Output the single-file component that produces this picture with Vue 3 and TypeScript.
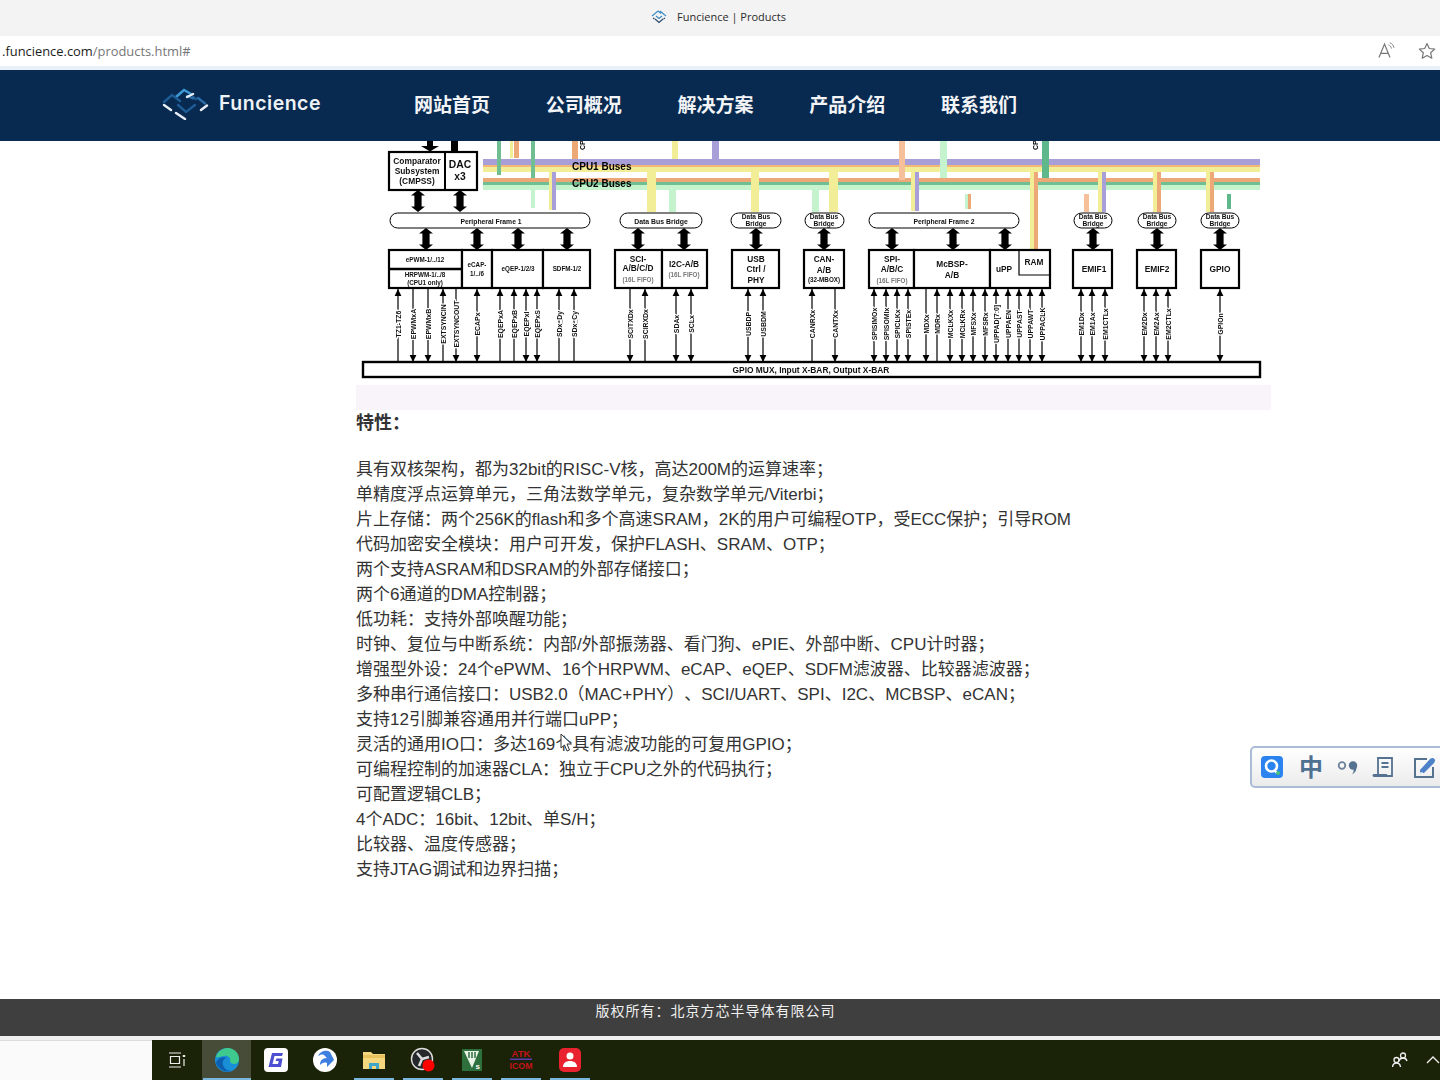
<script setup lang="ts">
const navItems = ['网站首页', '公司概况', '解决方案', '产品介绍', '联系我们']
const features = [
  '具有双核架构，都为32bit的RISC-V核，高达200M的运算速率；',
  '单精度浮点运算单元，三角法数学单元，复杂数学单元/Viterbi；',
  '片上存储：两个256K的flash和多个高速SRAM，2K的用户可编程OTP，受ECC保护；引导ROM',
  '代码加密安全模块：用户可开发，保护FLASH、SRAM、OTP；',
  '两个支持ASRAM和DSRAM的外部存储接口；',
  '两个6通道的DMA控制器；',
  '低功耗：支持外部唤醒功能；',
  '时钟、复位与中断系统：内部/外部振荡器、看门狗、ePIE、外部中断、CPU计时器；',
  '增强型外设：24个ePWM、16个HRPWM、eCAP、eQEP、SDFM滤波器、比较器滤波器；',
  '多种串行通信接口：USB2.0（MAC+PHY）、SCI/UART、SPI、I2C、MCBSP、eCAN；',
  '支持12引脚兼容通用并行端口uPP；',
  '灵活的通用IO口：多达169个具有滤波功能的可复用GPIO；',
  '可编程控制的加速器CLA：独立于CPU之外的代码执行；',
  '可配置逻辑CLB；',
  '4个ADC：16bit、12bit、单S/H；',
  '比较器、温度传感器；',
  '支持JTAG调试和边界扫描；',
]

type Band = { y: number; h: number; c: string }
const bands: Band[] = [
  { y: 159, h: 6, c: '#a99fd8' },
  { y: 165, h: 2, c: '#f1b878' },
  { y: 167, h: 5, c: '#f2ee98' },
  { y: 178, h: 4, c: '#eda878' },
  { y: 182, h: 3, c: '#6fbf92' },
  { y: 185, h: 5, c: '#c4f3cd' },
]
type Bar = { x: number; w: number; y1: number; y2: number; c: string }
const bars: Bar[] = [
  { x: 497, w: 4, y1: 141, y2: 175, c: '#6fbf92' },
  { x: 510, w: 3, y1: 141, y2: 158, c: '#f2ee98' },
  { x: 514, w: 5, y1: 141, y2: 158, c: '#eda878' },
  { x: 531, w: 4, y1: 141, y2: 178, c: '#6fbf92' },
  { x: 531, w: 4, y1: 190, y2: 208, c: '#c4f3cd' },
  { x: 549, w: 3, y1: 172, y2: 210, c: '#f2ee98' },
  { x: 552, w: 4, y1: 172, y2: 210, c: '#a99fd8' },
  { x: 572, w: 6, y1: 141, y2: 159, c: '#eda878' },
  { x: 672, w: 6, y1: 141, y2: 159, c: '#f2ee98' },
  { x: 712, w: 7, y1: 141, y2: 160, c: '#a99fd8' },
  { x: 647, w: 9, y1: 172, y2: 212, c: '#f2ee98' },
  { x: 669, w: 7, y1: 190, y2: 212, c: '#c4f3cd' },
  { x: 751, w: 8, y1: 172, y2: 212, c: '#f2ee98' },
  { x: 812, w: 7, y1: 190, y2: 212, c: '#c4f3cd' },
  { x: 829, w: 9, y1: 172, y2: 212, c: '#f2ee98' },
  { x: 899, w: 6, y1: 141, y2: 180, c: '#f6c09a' },
  { x: 940, w: 7, y1: 141, y2: 178, c: '#c4f3cd' },
  { x: 1042, w: 7, y1: 141, y2: 178, c: '#5fb78c' },
  { x: 911, w: 4, y1: 172, y2: 211, c: '#f2ee98' },
  { x: 915, w: 4, y1: 172, y2: 211, c: '#a99fd8' },
  { x: 965, w: 3, y1: 194, y2: 209, c: '#c4f3cd' },
  { x: 968, w: 3, y1: 194, y2: 209, c: '#eda878' },
  { x: 1030, w: 4, y1: 172, y2: 250, c: '#f2ee98' },
  { x: 1034, w: 4, y1: 172, y2: 250, c: '#eda878' },
  { x: 1084, w: 5, y1: 194, y2: 212, c: '#f6c09a' },
  { x: 1098, w: 4, y1: 172, y2: 212, c: '#f2ee98' },
  { x: 1102, w: 4, y1: 172, y2: 212, c: '#a99fd8' },
  { x: 1153, w: 4, y1: 172, y2: 212, c: '#f2ee98' },
  { x: 1157, w: 4, y1: 172, y2: 212, c: '#eda878' },
  { x: 1206, w: 4, y1: 172, y2: 212, c: '#f2ee98' },
  { x: 1210, w: 4, y1: 172, y2: 212, c: '#eda878' },
  { x: 1227, w: 4, y1: 194, y2: 209, c: '#5fb78c' },
]

const pills = [
  [390, 590], [620, 702], [731, 781], [805, 844], [869, 1019], [1074, 1112], [1138, 1176], [1201, 1239],
]
const boxes = [
  [389, 152, 88, 38], [389, 250, 73, 38], [462, 250, 30, 38], [492, 250, 51, 38], [543, 250, 47, 38],
  [615, 250, 47, 38], [662, 250, 45, 38], [732, 250, 47, 38], [804, 250, 40, 38], [869, 250, 45, 38],
  [914, 250, 76, 38], [990, 250, 60, 38], [1073, 250, 39, 38], [1137, 250, 39, 38], [1201, 250, 38, 38],
]

function thick(x: number, y1: number, y2: number): string {
  const s = 3.6
  const w = 7
  const h = 5.5
  return `M${x} ${y1}L${x + w} ${y1 + h}H${x + s}V${y2 - h}H${x + w}L${x} ${y2}L${x - w} ${y2 - h}H${x - s}V${y1 + h}H${x - w}Z`
}
const thickArrows = [
  ...[418, 460].map((x) => thick(x, 190, 212)),
  ...[426, 477, 518, 567, 638, 684, 756, 824, 892, 953, 1005, 1093, 1157, 1220].map((x) => thick(x, 228, 250)),
]

type Sig = { x: number; t: string; d: 'u' | 'd' | 'b' }
const signals: Sig[] = [
  { x: 398, t: 'TZ1-TZ6', d: 'u' }, { x: 413, t: 'EPWMxA', d: 'd' }, { x: 428, t: 'EPWMxB', d: 'd' },
  { x: 443, t: 'EXTSYNCIN', d: 'u' }, { x: 456, t: 'EXTSYNCOUT', d: 'd' }, { x: 477, t: 'ECAPx', d: 'b' },
  { x: 500, t: 'EQEPxA', d: 'u' }, { x: 514, t: 'EQEPxB', d: 'u' }, { x: 526, t: 'EQEPxI', d: 'b' },
  { x: 537, t: 'EQEPxS', d: 'b' }, { x: 559, t: 'SDx_Dy', d: 'u' }, { x: 574, t: 'SDx_Cy', d: 'u' },
  { x: 630, t: 'SCITXDx', d: 'd' }, { x: 645, t: 'SCIRXDx', d: 'u' }, { x: 676, t: 'SDAx', d: 'b' },
  { x: 691, t: 'SCLx', d: 'b' }, { x: 748, t: 'USBDP', d: 'b' }, { x: 763, t: 'USBDM', d: 'b' },
  { x: 812, t: 'CANRXx', d: 'u' }, { x: 835, t: 'CANTXx', d: 'd' }, { x: 874, t: 'SPISIMOx', d: 'b' },
  { x: 886, t: 'SPISOMIx', d: 'b' }, { x: 897, t: 'SPICLKx', d: 'b' }, { x: 908, t: 'SPISTEx', d: 'b' },
  { x: 926, t: 'MDXx', d: 'd' }, { x: 937, t: 'MDRx', d: 'u' }, { x: 950, t: 'MCLKXx', d: 'b' },
  { x: 962, t: 'MCLKRx', d: 'b' }, { x: 973, t: 'MFSXx', d: 'b' }, { x: 985, t: 'MFSRx', d: 'b' },
  { x: 996, t: 'UPPAD[7:0]', d: 'b' }, { x: 1008, t: 'UPPAEN', d: 'b' }, { x: 1019, t: 'UPPAST', d: 'b' },
  { x: 1030, t: 'UPPAWT', d: 'b' }, { x: 1042, t: 'UPPACLK', d: 'b' }, { x: 1081, t: 'EM1Dx', d: 'b' },
  { x: 1092, t: 'EM1Ax', d: 'b' }, { x: 1105, t: 'EM1CTLx', d: 'b' }, { x: 1144, t: 'EM2Dx', d: 'b' },
  { x: 1156, t: 'EM2Ax', d: 'b' }, { x: 1168, t: 'EM2CTLx', d: 'b' }, { x: 1220, t: 'GPIOn', d: 'b' },
]
function heads(s: Sig): string {
  let p = ''
  if (s.d !== 'd') p += `M${s.x} 289l3.4 7h-6.8Z`
  if (s.d !== 'u') p += `M${s.x} 362l3.4 -7h-6.8Z`
  return p
}

type Lbl = { x: number; y: number; t: string; s: number; c?: string }
const labels: Lbl[] = [
  { x: 417, y: 164, t: 'Comparator', s: 8.4 }, { x: 417, y: 174, t: 'Subsystem', s: 8.4 }, { x: 417, y: 184, t: '(CMPSS)', s: 8.4 },
  { x: 460, y: 168, t: 'DAC', s: 10.3 }, { x: 460, y: 180, t: 'x3', s: 10.3 },
  { x: 491, y: 224, t: 'Peripheral Frame 1', s: 6.8 }, { x: 661, y: 224, t: 'Data Bus Bridge', s: 6.9 },
  { x: 756, y: 219, t: 'Data Bus', s: 6.6 }, { x: 756, y: 226, t: 'Bridge', s: 6.6 },
  { x: 824, y: 219, t: 'Data Bus', s: 6.6 }, { x: 824, y: 226, t: 'Bridge', s: 6.6 },
  { x: 944, y: 224, t: 'Peripheral Frame 2', s: 6.8 },
  { x: 1093, y: 219, t: 'Data Bus', s: 6.6 }, { x: 1093, y: 226, t: 'Bridge', s: 6.6 },
  { x: 1157, y: 219, t: 'Data Bus', s: 6.6 }, { x: 1157, y: 226, t: 'Bridge', s: 6.6 },
  { x: 1220, y: 219, t: 'Data Bus', s: 6.6 }, { x: 1220, y: 226, t: 'Bridge', s: 6.6 },
  { x: 425, y: 262, t: 'ePWM-1/../12', s: 6.3 }, { x: 425, y: 277, t: 'HRPWM-1/../8', s: 6.3 }, { x: 425, y: 285, t: '(CPU1 only)', s: 6.3 },
  { x: 477, y: 267, t: 'eCAP-', s: 6.3 }, { x: 477, y: 276, t: '1/../6', s: 6.3 },
  { x: 518, y: 271, t: 'eQEP-1/2/3', s: 6.3 }, { x: 567, y: 271, t: 'SDFM-1/2', s: 6.3 },
  { x: 638, y: 262, t: 'SCI-', s: 8.3 }, { x: 638, y: 271, t: 'A/B/C/D', s: 8.3 }, { x: 638, y: 282, t: '(16L FIFO)', s: 6.3, c: '#777' },
  { x: 684, y: 267, t: 'I2C-A/B', s: 8.3 }, { x: 684, y: 277, t: '(16L FIFO)', s: 6.3, c: '#777' },
  { x: 756, y: 262, t: 'USB', s: 8.3 }, { x: 756, y: 272, t: 'Ctrl /', s: 8.3 }, { x: 756, y: 283, t: 'PHY', s: 8.3 },
  { x: 824, y: 262, t: 'CAN-', s: 8.3 }, { x: 824, y: 273, t: 'A/B', s: 8.3 }, { x: 824, y: 282, t: '(32-MBOX)', s: 6.3 },
  { x: 892, y: 262, t: 'SPI-', s: 8.3 }, { x: 892, y: 272, t: 'A/B/C', s: 8.3 }, { x: 892, y: 283, t: '(16L FIFO)', s: 6.3, c: '#777' },
  { x: 952, y: 267, t: 'McBSP-', s: 8.3 }, { x: 952, y: 278, t: 'A/B', s: 8.3 },
  { x: 1004, y: 272, t: 'uPP', s: 8.3 }, { x: 1034, y: 265, t: 'RAM', s: 8.3 },
  { x: 1094, y: 272, t: 'EMIF1', s: 8.4 }, { x: 1157, y: 272, t: 'EMIF2', s: 8.4 }, { x: 1220, y: 272, t: 'GPIO', s: 8.4 },
  { x: 811, y: 373, t: 'GPIO MUX, Input X-BAR, Output X-BAR', s: 8.4 },
]
const taskItems = ['edge', 'g', 'bird', 'folder', 'obs', 'vs', 'atk', 'red']
</script>

<template>
  <div class="page">
    <div class="tabbar">
      <svg class="tabicon" width="18" height="16" viewBox="0 0 18 16">
        <path d="M2 7L8 2l3 2.500M6 7l3 2.500L12 7M10 2l6 5" fill="none" stroke="#3e8fc4" stroke-width="1.200" />
        <path d="M5 10l4 3.500L13 10M3 9l1.500 1M15 9l-1.500 1" fill="none" stroke="#2c4a6b" stroke-width="1.100" />
      </svg>
      <span class="tabtitle">Funcience | Products</span>
    </div>
    <div class="addrbar">
      <span class="url"><span class="urldark">.funcience.com</span>/products.html#</span>
      <div class="addricons">
        <svg width="20" height="18" viewBox="0 0 20 18">
          <path d="M2 15.500L7.500 2l5.500 13.500M3.800 11.300h7.400" fill="none" stroke="#777" stroke-width="1.200" />
          <path d="M11.500 3c1.500.5 2.500 1.500 3 3.500M12.800.800c2.200.6 3.700 2.200 4.200 5" fill="none" stroke="#888" stroke-width="1" />
        </svg>
        <svg width="18" height="18" viewBox="0 0 18 18">
          <path d="M9 1.500l2.300 5 5.400.6-4 3.700 1.100 5.400L9 13.500l-4.800 2.700 1.100-5.400-4-3.700 5.400-.6Z" fill="none" stroke="#777" stroke-width="1.200" stroke-linejoin="round" />
        </svg>
      </div>
    </div>
    <div class="addrgap"></div>

    <header class="nav">
      <div class="logo">
        <svg width="50" height="34" viewBox="162 84 50 34" fill="none" stroke-width="2.400" stroke-linecap="round">
          <path d="M176 95l8-7 7 4" stroke="#3f9bd6" />
          <path d="M164 100l8-7 8 6M178 103l8 7 9-7M196 97l-3-2" stroke="#1d5c94" />
          <path d="M187 94l6 2.500M198 96l7 5.500" stroke="#2a6da8" />
          <path d="M164 103l7 5M201 108l6-4.500M176 111l9 6" stroke="#e8eef5" />
          <path d="M187 95l6-3" stroke="#e8eef5" />
        </svg>
        <span class="logotext">Funcience</span>
      </div>
      <nav class="navlist">
        <a v-for="n in navItems" :key="n" class="navitem">{{ n }}</a>
      </nav>
    </header>

    <main class="main">
      <svg class="diagram" width="915" height="269" viewBox="356 141 915 269">
        <rect x="356" y="385" width="915" height="25" fill="#f8f4fa" />
        <g class="art">
          <rect v-for="(b, i) in bands" :key="'bd' + i" x="483" :y="b.y" width="777" :height="b.h" :fill="b.c" />
          <rect v-for="(b, i) in bars" :key="'br' + i" :x="b.x" :y="b.y1" :width="b.w" :height="b.y2 - b.y1" :fill="b.c" />
          <rect x="427" y="141" width="6" height="8" fill="#000" />
          <path d="M421 146h18l-9 5.500Z" fill="#000" />
          <rect x="451" y="141" width="7" height="10" fill="#000" />
          <text class="t bold" transform="translate(585 150) rotate(-90)" font-size="7">CP</text>
          <text class="t bold" transform="translate(1038 150) rotate(-90)" font-size="7">CP</text>
          <text class="t bold" x="572" y="170" font-size="10">CPU1 Buses</text>
          <text class="t bold" x="572" y="187" font-size="10">CPU2 Buses</text>

          <path v-for="(d, i) in thickArrows" :key="'th' + i" :d="d" fill="#000" />
          <rect v-for="(p, i) in pills" :key="'pl' + i" :x="p[0]" y="213" :width="p[1] - p[0]" height="15" rx="7.500" fill="#fff" stroke="#000" stroke-width="1" />
          <rect v-for="(b, i) in boxes" :key="'bx' + i" :x="b[0]" :y="b[1]" :width="b[2]" :height="b[3]" fill="#fff" stroke="#000" stroke-width="2.200" />
          <line x1="445" y1="152" x2="445" y2="190" stroke="#000" stroke-width="2" />
          <line x1="389" y1="269" x2="462" y2="269" stroke="#000" stroke-width="2.600" />
          <path d="M1019 250v25h31" fill="none" stroke="#000" stroke-width="1.200" />
          <rect x="363" y="362" width="897" height="15" fill="#fff" stroke="#000" stroke-width="2.400" />

          <g v-for="(s, i) in signals" :key="'sg' + i">
            <line :x1="s.x" y1="289" :x2="s.x" y2="362" stroke="#000" stroke-width="1.200" />
            <path :d="heads(s)" fill="#000" />
            <text class="t bold sig" :transform="`translate(${s.x + 2.500} 324) rotate(-90)`" text-anchor="middle" font-size="6.900">{{ s.t }}</text>
          </g>
          <text v-for="(l, i) in labels" :key="'lb' + i" class="t bold" :x="l.x" :y="l.y" :font-size="l.s" :fill="l.c || '#111'" text-anchor="middle">{{ l.t }}</text>
        </g>
      </svg>

      <h3 class="heading">特性：</h3>
      <div class="features">
        <p v-for="f in features" :key="f" class="line">{{ f }}</p>
      </div>
    </main>

    <footer class="footer">版权所有：北京方芯半导体有限公司</footer>
    <div class="footgap"></div>

    <div class="taskbar">
      <div class="taskleft"></div>
      <div class="taskdark">
        <div class="tview">
          <svg width="18" height="16" viewBox="0 0 18 16" fill="none" stroke="#eee" stroke-width="1.200">
            <path d="M1 1h12M1 15h12M2.500 4.500h9v7h-9Z" />
            <path d="M16 3v2" stroke-width="2.400" />
            <path d="M16 7v7" />
          </svg>
        </div>
        <div v-for="t in taskItems" :key="t" class="titem" :class="{ active: t === 'edge', plain: t === 'g' || t === 'bird' }">
          <svg class="ticon" width="26" height="26" viewBox="0 0 26 26">
            <template v-if="t === 'edge'">
              <circle cx="13" cy="13" r="12" fill="#1a8fd8" />
              <path d="M2 10C4 3 10 1 14 1c6 0 11 5 11 11 0 3-2 5-5 5-2 0-4-1-4-3 1-3-2-6-6-5-3 0-6 2-8 1Z" fill="#3ec98d" />
              <path d="M13 11c-3 0-5 3-4 7 1 3 4 6 8 6-6 2-13-2-15-8 1-4 6-7 11-5Z" fill="#0c5fae" />
            </template>
            <template v-else-if="t === 'g'">
              <rect x="1" y="1" width="24" height="24" rx="4" fill="#fff" />
              <path d="M9 6h11l-1 3H11.500l-2 8h5.500l.7-3h-3l.6-2.500h6.200L18 20H5.500Z" fill="#4d4fd0" />
            </template>
            <template v-else-if="t === 'bird'">
              <circle cx="13" cy="13" r="12" fill="#fff" />
              <path d="M6 9c3-6 9-6 12-4l4 8-7 7v-4c-3-1-5 0-7 2 0-4 2-7 7-7l-3-3c-2-1-4 0-6 1Z" fill="#3d7fe0" />
            </template>
            <template v-else-if="t === 'folder'">
              <path d="M2 5h8l2 2h12v15H2Z" fill="#f4d77e" />
              <rect x="2" y="8" width="22" height="3" fill="#e8c25c" />
              <path d="M8 22v-6h10v6h-3v-3h-4v3Z" fill="#3fa5c9" />
            </template>
            <template v-else-if="t === 'obs'">
              <circle cx="12" cy="12" r="10.500" fill="#25282a" stroke="#ddd" stroke-width="1.400" />
              <path d="M12 12L7 6M12 12l7-2M12 12l-3 7" stroke="#ddd" stroke-width="2.500" />
              <circle cx="18.500" cy="18.500" r="6" fill="#f00" />
            </template>
            <template v-else-if="t === 'vs'">
              <rect x="3" y="2" width="20" height="22" fill="#2e6f3e" />
              <path d="M5 4h15l-7 17Z" fill="#e9f3e6" />
              <path d="M10 5v6M13 5v6M16 5v6" stroke="#2e6f3e" stroke-width="1.500" />
              <text x="16.500" y="22" font-size="8" fill="#fff" class="t bold">s</text>
            </template>
            <template v-else-if="t === 'atk'">
              <text x="13" y="10" text-anchor="middle" font-size="9.500" fill="#c4121a" class="t bold">ATK</text>
              <rect x="2" y="11.500" width="22" height="1.500" fill="#5b3bb0" />
              <text x="13" y="21.500" text-anchor="middle" font-size="8.800" fill="#c4121a" class="t bold">ICOM</text>
            </template>
            <template v-else>
              <rect x="2" y="1" width="22" height="24" rx="5" fill="#e8232f" />
              <circle cx="13" cy="9" r="3.500" fill="#fff" />
              <path d="M6 20c0-4 3-6 7-6s7 2 7 6Z" fill="#fff" />
            </template>
          </svg>
        </div>
        <div class="tray">
          <svg width="18" height="18" viewBox="0 0 18 18" fill="none" stroke="#f0f0f0" stroke-width="1.300">
            <circle cx="12" cy="4.500" r="2.500" />
            <path d="M8 10c.5-2 2-3 4-3s3.500 1 4 3" />
            <circle cx="5.500" cy="9" r="2.500" />
            <path d="M1.500 16c.3-2.500 2-4 4-4s3.700 1.500 4 4" />
          </svg>
          <svg width="14" height="8" viewBox="0 0 14 8" fill="none" stroke="#f0f0f0" stroke-width="1.300">
            <path d="M1 7l6-6 6 6" />
          </svg>
        </div>
      </div>
    </div>

    <div class="ime">
      <svg width="24" height="24" viewBox="0 0 24 24">
        <rect x="1" y="1" width="22" height="22" rx="4" fill="#2a83ee" />
        <circle cx="11.500" cy="11" r="5.500" fill="none" stroke="#fff" stroke-width="2.600" />
        <path d="M14 15l3 3" stroke="#fff" stroke-width="2.400" />
        <circle cx="18" cy="18" r="2" fill="#49c27a" />
      </svg>
      <span class="imezh">中</span>
      <svg width="24" height="24" viewBox="0 0 24 24">
        <circle cx="6" cy="10.500" r="3.300" fill="none" stroke="#6d8299" stroke-width="1.800" />
        <circle cx="17" cy="10.500" r="4.200" fill="#557290" />
        <path d="M20.500 11c.5 4-1.500 7-4.500 8.500 1.500-2 2-4 1.500-6Z" fill="#557290" />
      </svg>
      <svg class="imedoc" width="24" height="24" viewBox="0 0 24 24" fill="none" stroke="#557290" stroke-width="1.800">
        <path d="M6 20V3h14v18H3" />
        <path d="M9.500 8h7M9.500 12h7" />
        <path d="M2 20.500h12" stroke-width="2.800" stroke-linecap="round" />
      </svg>
      <svg class="imeedit" width="24" height="24" viewBox="0 0 24 24" fill="none">
        <path d="M15 4H3v18h18V12" stroke="#557290" stroke-width="2" />
        <path d="M8 15l10-11c1.500-1.500 3.500-1.500 4.500 0s.5 3-1 4.500L12 18l-4 .5Z" fill="#4d82c8" />
        <path d="M8 18h3" stroke="#fff" stroke-width="1.200" />
      </svg>
    </div>

    <svg class="cursor" width="13" height="19" viewBox="0 0 13 19">
      <path d="M1 1v14l3.500-3 2.500 6 2.500-1-2.500-6h4.500Z" fill="#fff" stroke="#333" stroke-width="1" />
    </svg>
  </div>
</template>

<style>
html, body { margin: 0; background: #fff; }
</style>

<style scoped>
.page {
  width: 1440px;
  height: 1080px;
  display: flex;
  flex-direction: column;
  position: relative;
  overflow: hidden;
  background: #fff;
  font-family: "Liberation Sans", "Noto Sans CJK SC", sans-serif;
  text-spacing-trim: space-all;
}
.tabbar {
  height: 36px;
  background: #f3f3f3;
  display: flex;
  align-items: center;
  justify-content: center;
  gap: 9px;
  box-sizing: border-box;
  padding: 0 4px 3px 0;
}
.tabtitle {
  font: 11px "Open Sans", sans-serif;
  color: #2b2b2b;
}
.addrbar {
  height: 30px;
  background: #fff;
  display: flex;
  align-items: center;
  padding: 0 4px 0 2px;
}
.url {
  font: 12.900px "Open Sans", sans-serif;
  color: #777;
}
.urldark { color: #1c1c1c; }
.addricons {
  margin-left: auto;
  display: flex;
  align-items: center;
  gap: 21px;
}
.addrgap { height: 4px; background: #e9f0f8; }
.nav {
  height: 71px;
  flex: none;
  background: #082a50;
  display: flex;
  align-items: center;
  padding-left: 162px;
}
.logo {
  width: 252px;
  display: flex;
  align-items: center;
  gap: 7px;
  margin-top: -5px;
}
.logotext {
  font: 600 19.500px Inter, sans-serif;
  letter-spacing: 0.500px;
  color: #eef3f8;
}
.navlist {
  display: flex;
  gap: 55.750px;
  margin-top: -4px;
}
.navitem {
  font-size: 19px;
  font-weight: 700;
  color: #f2f4f7;
  font-family: "Noto Sans CJK SC", sans-serif;
}
.main {
  flex: 1;
  padding-left: 356px;
  background: #fff;
  color: #333;
}
.diagram { display: block; }
.art { filter: blur(0.450px); }
.t { font-family: "Liberation Sans", sans-serif; }
.bold { font-weight: 700; }
.sig {
  fill: #111;
  stroke: #fff;
  stroke-width: 2.500px;
  paint-order: stroke;
}
.heading {
  margin: 1px 0 21px;
  font-size: 18px;
  line-height: 25px;
  font-weight: 700;
  color: #333;
}
.line {
  margin: 0;
  font-size: 17px;
  line-height: 25px;
  white-space: nowrap;
  color: #333;
}
.footer {
  height: 37px;
  flex: none;
  box-sizing: border-box;
  background: #3f3f3f;
  color: #f0f0f0;
  text-align: center;
  font-size: 14px;
  letter-spacing: 1px;
  line-height: 24px;
  padding-right: 9px;
}
.footgap { height: 4px; flex: none; background: #efefef; }
.taskbar {
  height: 40px;
  flex: none;
  display: flex;
}
.taskleft { width: 152px; background: #fafafa; border-top: 1px solid #ddd; box-sizing: border-box; }
.taskdark {
  flex: 1;
  background: #1a2208;
  display: flex;
  align-items: stretch;
}
.tview {
  width: 50px;
  display: flex;
  align-items: center;
  justify-content: center;
}
.titem {
  width: 49px;
  box-sizing: border-box;
  display: flex;
  align-items: center;
  justify-content: center;
  background: linear-gradient(#7ab8e0, #7ab8e0) center bottom / 40px 2px no-repeat;
}
.titem.plain { background: none; }
.titem.active { background: linear-gradient(#7ab8e0, #7ab8e0) center bottom / 48px 2px no-repeat, #474c38; }
.tray {
  margin-left: auto;
  display: flex;
  align-items: center;
  gap: 17px;
}
.ime {
  position: absolute;
  left: 1250px;
  top: 746px;
  width: 200px;
  height: 42px;
  box-sizing: border-box;
  border: 2px solid #a9bdd6;
  border-radius: 5px;
  background: linear-gradient(#ffffff, #ebebeb);
  display: flex;
  align-items: center;
  gap: 13px;
  padding-left: 8px;
}
.imezh {
  width: 24px;
  margin-left: 2px;
  margin-top: -2px;
  font: 700 24px "Noto Sans CJK SC", sans-serif;
  color: #4f7191;
  text-align: center;
  line-height: 24px;
}
.imedoc { margin-left: -1px; }
.imeedit { margin-left: 3px; }
.cursor {
  position: absolute;
  left: 560px;
  top: 733px;
}
</style>
